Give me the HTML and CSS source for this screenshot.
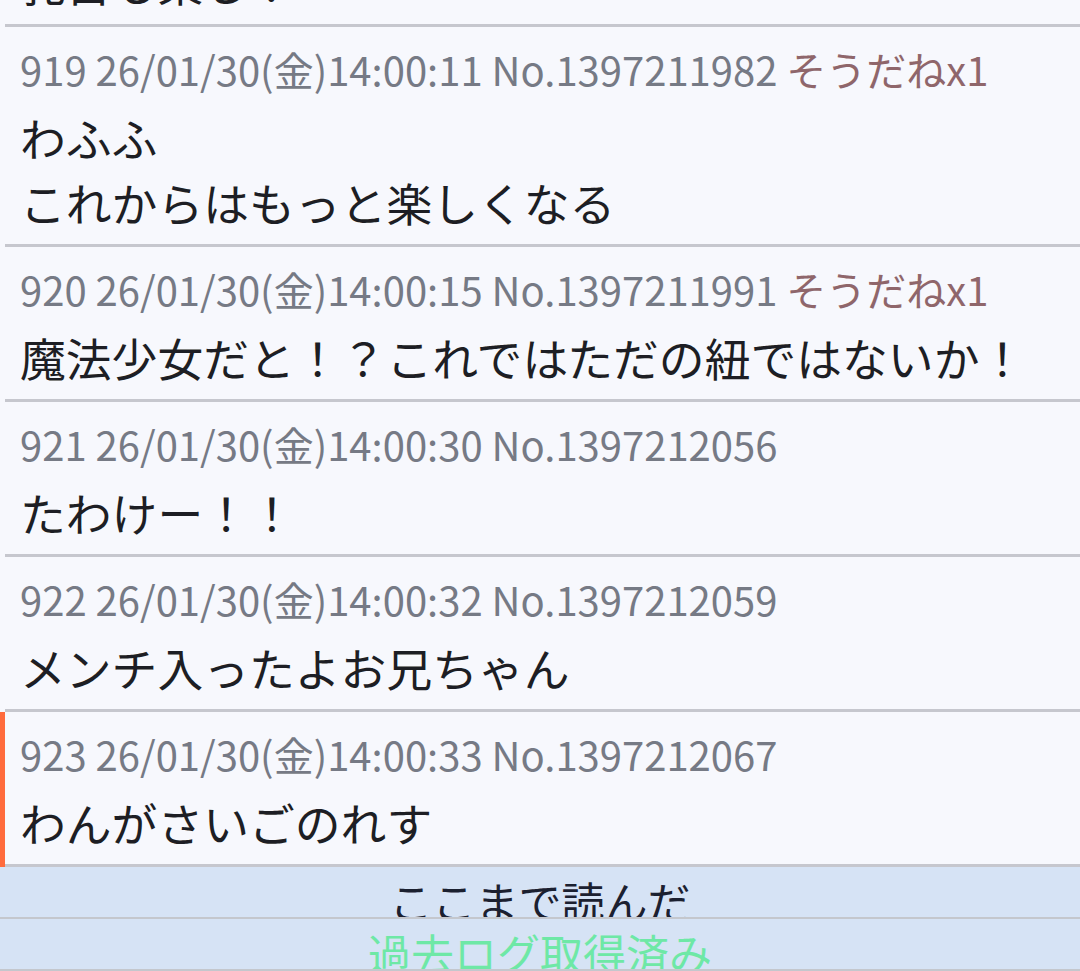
FILE: index.html
```html
<!DOCTYPE html>
<html lang="ja">
<head>
  <meta charset="UTF-8">
  <meta name="viewport" content="width=device-width, initial-scale=1.0">
  <title>スレッド</title>
  <link rel="stylesheet" href="styles.css">
</head>
<body>
  <div class="thread">
    <div class="post cut">
      <div class="text">乳首も楽し？</div>
    </div>
    <div class="post">
      <div class="meta">919 26/01/30(金)14:00:11 No.1397211982 <span class="sodane">そうだねx1</span></div>
      <div class="text">わふふ<br>これからはもっと楽しくなる</div>
    </div>
    <div class="post">
      <div class="meta">920 26/01/30(金)14:00:15 No.1397211991 <span class="sodane">そうだねx1</span></div>
      <div class="text">魔法少女だと！？これではただの紐ではないか！</div>
    </div>
    <div class="post">
      <div class="meta">921 26/01/30(金)14:00:30 No.1397212056</div>
      <div class="text">たわけー！！</div>
    </div>
    <div class="post">
      <div class="meta">922 26/01/30(金)14:00:32 No.1397212059</div>
      <div class="text">メンチ入ったよお兄ちゃん</div>
    </div>
    <div class="post latest">
      <div class="meta">923 26/01/30(金)14:00:33 No.1397212067</div>
      <div class="text">わんがさいごのれす</div>
    </div>
  </div>
  <div class="marker">ここまで読んだ</div>
  <div class="marker status">過去ログ取得済み</div>
</body>
</html>
```

FILE: styles.css
```css
body {
  margin: 0;
  background-color: #f7f8fd;
  font-family: "Noto Sans CJK JP", "Noto Sans", sans-serif;
  color: #1d1e24;
  overflow: hidden;
}

.thread {
  margin-left: 5px;
}

.post {
  padding: 12px 0 9px 15px;
  border-bottom: 3px solid #c6c7ce;
}

.post.cut {
  box-sizing: border-box;
  height: 27px;
  padding-top: 0;
  display: flex;
  flex-direction: column;
  justify-content: flex-end;
  overflow: hidden;
}

.post.latest {
  box-shadow: -5px 0 0 0 #ff6b3d;
}

.meta {
  font-size: 40px;
  line-height: 60px;
  margin-bottom: 6px;
  color: #767a85;
  white-space: nowrap;
}

.sodane {
  color: #8f666b;
}

.text {
  font-size: 45.8px;
  line-height: 65px;
  flex-shrink: 0;
  white-space: nowrap;
}

.marker {
  padding-top: 8px;
  height: 42px;
  overflow: hidden;
  background-color: #d6e3f5;
  border-bottom: 2px solid #c4c7cd;
  text-align: center;
  font-size: 43px;
  line-height: 1.2;
  color: #1b2030;
}

.marker.status {
  color: #6ee8a6;
}
```
